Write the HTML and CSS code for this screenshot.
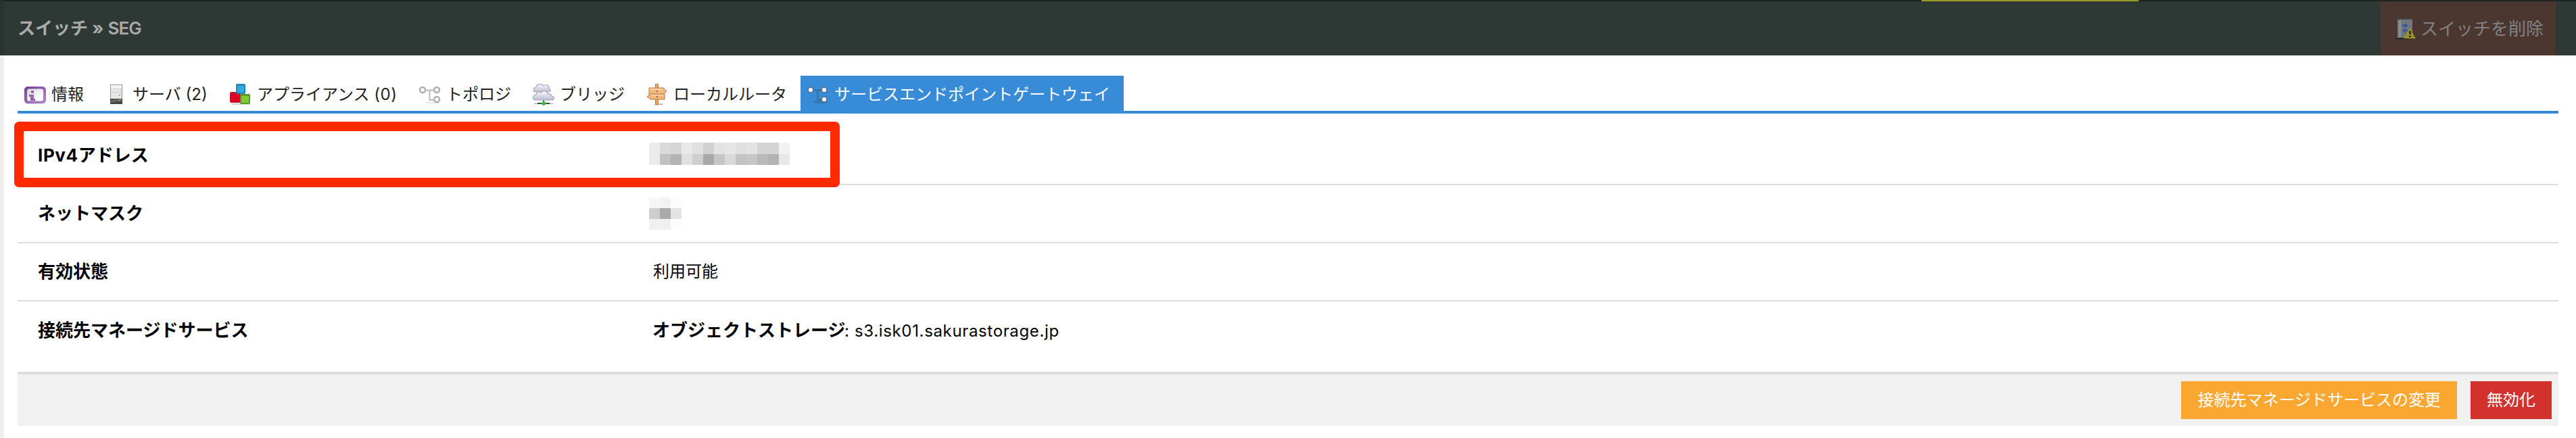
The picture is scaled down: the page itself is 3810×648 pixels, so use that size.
FILE: index.html
```
<!DOCTYPE html>
<html lang="ja">
<head>
<meta charset="utf-8">
<title>スイッチ » SEG</title>
<link rel="stylesheet" href="styles.css">
</head>
<body>
<header class="header">
  <div class="notice"></div>
  <h1 class="title">スイッチ » <span class="name">SEG</span></h1>
  <button class="delete">
    <svg class="delete-icon" width="32" height="34" viewBox="0 0 32 34">
      <path d="M2 31h20v2H2z" fill="#272221"/>
      <path d="M5 2h22v29H5z" fill="#71787b"/>
      <path d="M5 2h22v2H5z" fill="#40484a"/>
      <path d="M7 5h3v25H7z" fill="#8b9293"/>
      <path d="M12 11h4V9l5 4-5 4v-3h-4zM21 19h-4v-3l-5 4 5 4v-3h4z" fill="#4054a0"/>
      <path d="M23 16l9 16H14z" fill="#999129"/>
      <path d="M22 21h3l-.5 5h-2zM22 28h3v2h-3z" fill="#282817"/>
    </svg>
    <span>スイッチを削除</span>
  </button>
</header>
<main class="main">
  <nav class="tabs">
    <a class="tab tab-info">
      <svg class="icon" viewBox="0 0 32 32">
        <defs><linearGradient id="purple" x2="1" y2="1"><stop stop-color="#743c91"/><stop offset="1" stop-color="#b58bd0"/></linearGradient>
        <linearGradient id="panel" x2="1" y2="1"><stop stop-color="#d6d5da"/><stop offset=".8" stop-color="#fff"/></linearGradient></defs>
        <rect x="1" y="28" width="30" height="2" rx="1" fill="#ddd"/>
        <rect x="0" y="4" width="32" height="25" rx="5" fill="url(#purple)"/>
        <rect x="4" y="7.500" width="24" height="18" rx="3" fill="url(#panel)"/>
        <path d="M10 10h4v4h-4zM7 16h7v6h2v3H9v-6H7z" fill="#9465ad"/>
      </svg><span>情報</span></a>
    <a class="tab tab-server">
      <svg class="icon" viewBox="0 0 32 32">
        <rect x="7.500" y="1.500" width="17" height="28" fill="#e6e6e6" stroke="#999"/>
        <path d="M8 2h16v5L8 10z" fill="#f5f5f5"/><path d="M8 7h16v1H8zM8 12h16v1H8z" fill="#ccc"/>
        <path d="M7 22h18v8H7z" fill="#454545"/><path d="M8 24l16-2v3L8 28z" fill="#686868"/>
        <path d="M20 16h2v2h-2z" fill="#a4a4a4"/><path d="M20 24h2v2h-2z" fill="#75b944"/>
      </svg><span>サーバ (2)</span></a>
    <a class="tab tab-appliance">
      <svg class="icon" viewBox="0 0 32 32">
        <path d="M2 29h28v2H2z" fill="#d5d5d5"/>
        <rect x="0" y="12" width="16" height="16" rx="2" fill="#be1730"/><rect x="2" y="16" width="11" height="10" rx="1" fill="#ea001f"/>
        <rect x="15" y="15" width="15" height="15" rx="2" fill="#579b2c"/><rect x="17" y="18" width="11" height="10" rx="1" fill="#80ca35"/>
        <rect x="9" y="0" width="14" height="15" rx="2" fill="#2088bd"/><rect x="11" y="3" width="10" height="10" rx="1" fill="#31aae0"/>
      </svg><span>アプライアンス <span class="count">(0)</span></span></a>
    <a class="tab tab-topology">
      <svg class="icon" viewBox="0 0 32 32">
        <ellipse cx="20" cy="28" rx="11" ry="2" fill="#eee"/>
        <path d="M9 9.500h12M15.500 10v14H22" fill="none" stroke="#bbb" stroke-width="2"/>
        <g fill="#fafafa" stroke="#b0b0b0" stroke-width="2.500"><circle cx="5" cy="9" r="4"/><circle cx="26" cy="9" r="4"/><circle cx="26" cy="23" r="4"/></g>
      </svg><span>トポロジ</span></a>
    <a class="tab tab-bridge">
      <svg class="icon" viewBox="0 0 32 32">
        <defs><linearGradient id="cloud" x2="0" y2="1"><stop stop-color="#fafaff"/><stop offset="1" stop-color="#bbbcd0"/></linearGradient></defs>
        <path d="M2 29h28v1H2z" fill="#999"/><path d="M7 28h18v2H7z" fill="#444"/>
        <path d="M15 23h2v5h-2z" fill="#2a8a2a"/>
        <g fill="url(#cloud)" stroke="#a5a6bc" stroke-width="1.200">
          <path d="M4 12c-4 0-4-6 1-7 1-5 8-6 11-2 5-3 9 0 8 4 4 2 2 5-1 5z"/>
          <path d="M4 24c-5 0-5-7 1-8 0-4 4-5 7-3 3-4 10-2 10 2 4-1 6 1 5 3 6 0 5 6 1 6z"/>
        </g>
        <path d="M16 25l4 4-4 4-4-4z" fill="#39bb42"/>
      </svg><span>ブリッジ</span></a>
    <a class="tab tab-router">
      <svg class="icon" viewBox="0 0 32 32">
        <path d="M8 31l16-2v2z" fill="#aaa"/>
        <g fill="#e9a86a" stroke="#bd7841" stroke-width="1">
          <path d="M13.500 0h4v31h-4z"/><path d="M4 6h21l5 5-5 5H4z" fill="#f0ba81"/><path d="M27 15H6l-5 4 5 4h21z" fill="#f0b577"/>
        </g>
        <path d="M5 8h19M7 17h18" stroke="#f7d0a1" stroke-width="2"/>
        <path d="M15 10h2v2h-2zM15 18h2v2h-2z" fill="#8f5c36"/>
      </svg><span>ローカルルータ</span></a>
    <a class="tab tab-seg active">
      <svg class="icon" viewBox="0 0 32 32">
        <ellipse cx="19" cy="27" rx="11" ry="2.500" fill="#347bbb"/>
        <path d="M8 9.500h14M15.500 10v14H24" fill="none" stroke="#356b9b" stroke-width="2"/>
        <g fill="#fff" stroke="#547493" stroke-width="1.800"><circle cx="5" cy="9" r="4"/><circle cx="25" cy="9" r="4"/><circle cx="25" cy="23" r="4"/></g>
      </svg><span>サービスエンドポイントゲートウェイ</span></a>
  </nav>
  <dl class="details">
    <div class="row first"><dt><span class="proto">IPv4</span>アドレス</dt>
      <dd><div class="mosaic address">
        <i class="c1"></i><i class="c2"></i><i class="c3"></i><i class="c4"></i><i class="c5"></i><i class="c6"></i><i class="c7"></i><i class="c8"></i><i class="c5"></i><i class="c7"></i><i class="c9"></i><i class="c9"></i><i class="c0"></i>
        <i class="c1"></i><i class="d1"></i><i class="d2"></i><i class="c5"></i><i class="d3"></i><i class="d4"></i><i class="d5"></i><i class="c2"></i><i class="d6"></i><i class="d5"></i><i class="d7"></i><i class="d2"></i><i class="c4"></i>
      </div></dd></div>
    <div class="row"><dt>ネットマスク</dt>
      <dd><div class="mosaic mask">
        <i class="e1"></i><i class="c0"></i><i class="e2"></i>
        <i class="d3"></i><i class="d4"></i><i class="c7"></i>
        <i class="e3"></i><i class="e3"></i><i class="e2"></i>
      </div></dd></div>
    <div class="row"><dt>有効状態</dt><dd>利用可能</dd></div>
    <div class="row last"><dt>接続先マネージドサービス</dt><dd><strong>オブジェクトストレージ</strong><span class="host">: s3.isk01.sakurastorage.jp</span></dd></div>
  </dl>
  <footer class="actions">
    <button class="btn change">接続先マネージドサービスの変更</button>
    <button class="btn disable">無効化</button>
  </footer>
  <div class="highlight"></div>
</main>
</body>
</html>
```
FILE: styles.css
```
* { box-sizing: border-box; }
body {
  margin: 0;
  height: 648px;
  overflow: hidden;
  background: #fff;
  color: #000;
  font: 24px/32px Inter, "Noto Sans CJK JP", sans-serif;
}
button { border: 0; padding: 0; margin: 0; font: inherit; }
.header {
  position: relative;
  display: flex;
  justify-content: space-between;
  height: 82px;
  padding: 0 30px 0 20px;
  background: #2e3935;
  border-top: 2px solid #1d2522;
  border-left: 6px solid #2b3330;
}
.notice {
  position: absolute;
  top: -2px;
  left: 2836px;
  width: 321px;
  height: 2px;
  background: #9b9b25;
}
.title {
  margin: 0;
  font-size: 26px;
  font-weight: 700;
  line-height: 80px;
  color: #aaa;
  white-space: pre;
}
.name { font-weight: 600; letter-spacing: -1px; }
.delete {
  display: flex;
  align-items: center;
  width: 259px;
  height: 80px;
  padding: 0 0 0 20px;
  gap: 8px;
  background: #4b3630;
  color: #828282;
  font-size: 26px;
  white-space: nowrap;
}
.delete span { line-height: 32px; padding-top: 2px; margin-left: -1px; }
.main {
  position: relative;
  height: 566px;
  padding: 30px 26px 0 20px;
  border-left: 6px solid #eee;
}
.tabs {
  display: flex;
  height: 56px;
  border-bottom: 4px solid #388cd7;
}
.tab {
  display: flex;
  align-items: center;
  gap: 8px;
  height: 56px;
  padding: 0 0 0 10px;
  color: #222;
  white-space: nowrap;
}
.tab.active { height: 56px; background: #388cd7; color: #fff; }
.icon { width: 32px; height: 32px; flex: none; }
.count { letter-spacing: .5px; }
.tab-info { width: 120px; }
.tab-server { width: 184px; }
.tab-appliance { width: 280px; }
.tab-topology { width: 168px; }
.tab-bridge { width: 168px; }
.tab-router { width: 238px; }
.tab-seg { width: 478px; }
.details { margin: 0; padding-top: 20px; height: 382px; }
.row {
  display: flex;
  align-items: center;
  height: 86px;
  padding-left: 30px;
  border-bottom: 2px solid #ddd;
}
.row.last { border-bottom: 0; }
dt { width: 910px; font-size: 26px; font-weight: 700; }
dd { margin: 0; }
strong { font-size: 26px; margin-left: -1px; }
.proto { letter-spacing: .6px; }
.host { letter-spacing: .65px; margin-left: -1.500px; }
.mosaic { display: grid; margin-left: -6px; }
.mosaic.address { grid-template: 17px 16px / repeat(13, 16px); margin-top: -6px; }
.mosaic.mask { grid-template: repeat(3, 16px) / repeat(3, 16px); }
.c0 { background: #f2f2f2; } .c1 { background: #ebebeb; } .c2 { background: #d9d9d9; }
.c3 { background: #d6d6d6; } .c4 { background: #e8e8e8; } .c5 { background: #e0e0e0; }
.c6 { background: #d1d1d1; } .c7 { background: #e3e3e3; } .c8 { background: #e6e6e6; }
.c9 { background: #d4d4d4; } .d1 { background: #c1c1c1; } .d2 { background: #b3b3b3; }
.d3 { background: #cecece; } .d4 { background: #a9a9a9; } .d5 { background: #c6c6c6; }
.d6 { background: #c3c3c3; } .d7 { background: #b9b9b9; }
.e1 { background: #f6f6f6; } .e2 { background: #fcfcfc; } .e3 { background: #f0f0f0; }
.actions {
  display: flex;
  justify-content: flex-end;
  gap: 20px;
  height: 80px;
  padding: 10px 10px 0 0;
  background: #f1f1f1;
  border-top: 4px solid #ddd;
}
.btn { height: 56px; padding: 0 24px; color: #fff; font-size: 24px; line-height: 56px; }
.change { background: #faa732; }
.disable { background: #d2322d; }
.highlight {
  position: absolute;
  top: 98px;
  left: 14.500px;
  width: 1221.500px;
  height: 96.600px;
  border: 14px solid #ff2a00;
  border-radius: 7px;
}
```
